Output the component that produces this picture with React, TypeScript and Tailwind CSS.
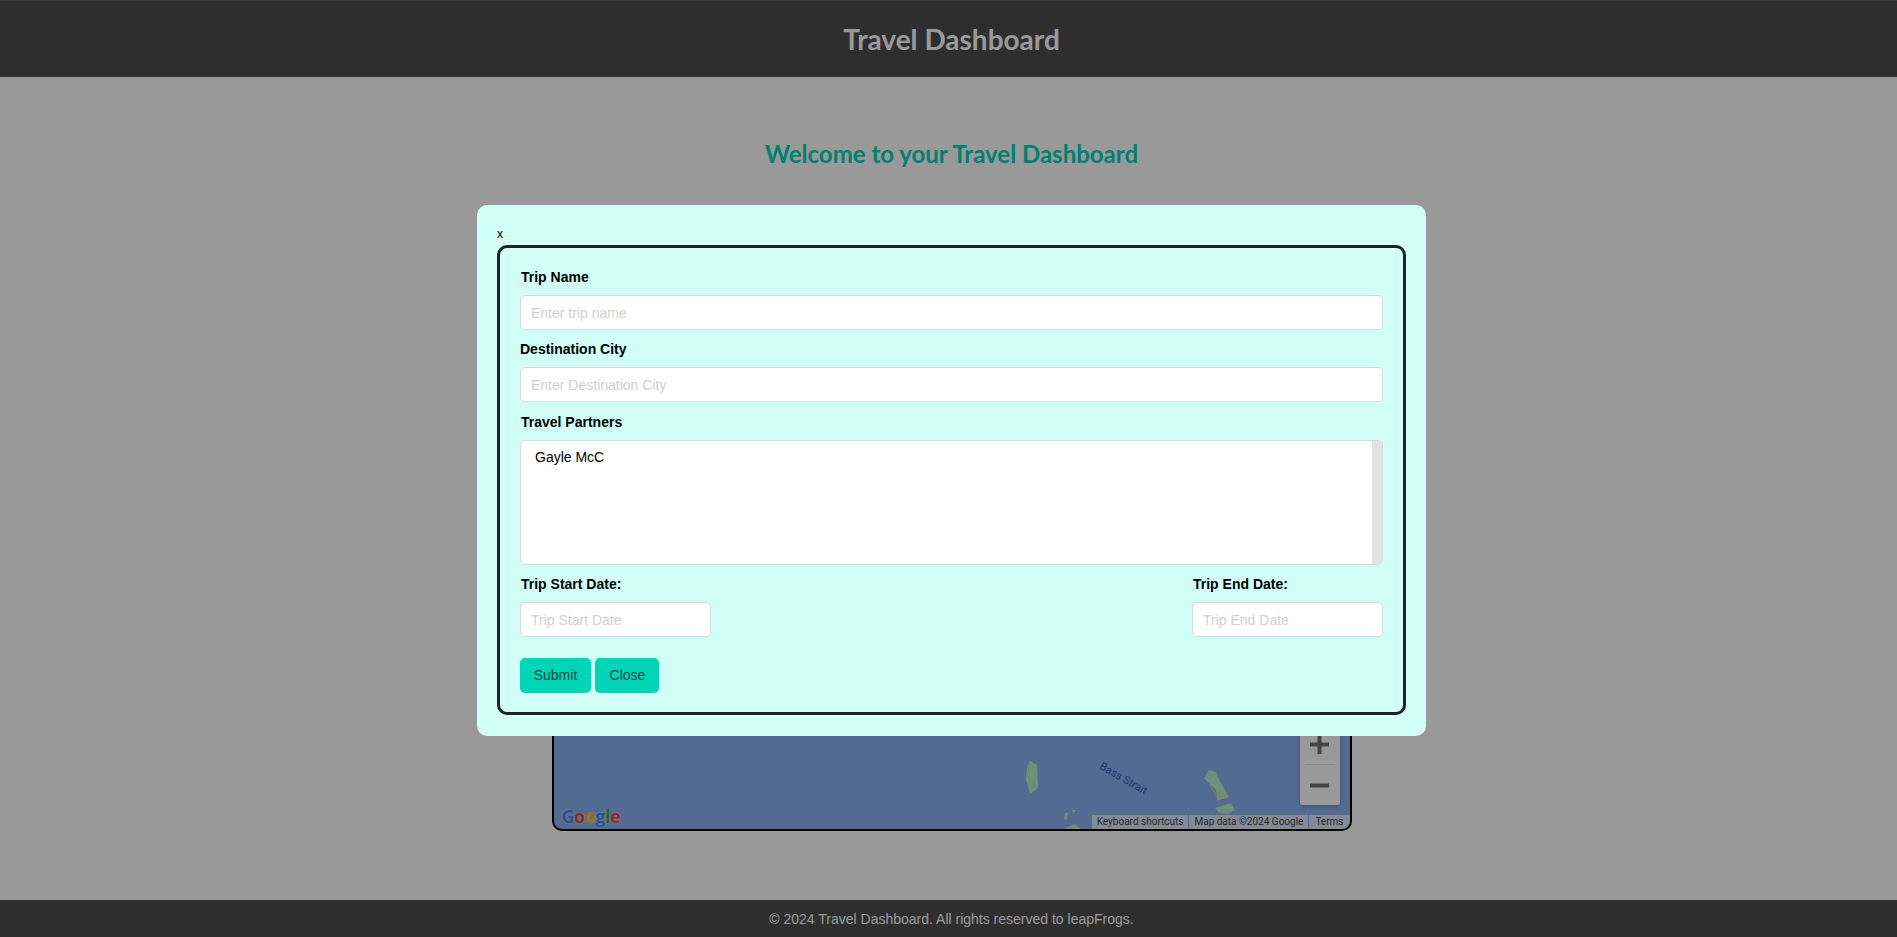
import React from 'react';

const labelClass = 'block mb-2 text-[14px] leading-5 font-bold text-black';
const inputClass =
  'block h-[35px] w-full rounded-[5px] border border-[#d8d8e2] bg-white px-[10px] text-[14px] text-black outline-none placeholder:text-[#cfcfcf]';

const TravelMap: React.FC = () => (
  <div className="relative w-[800px] h-[600px] overflow-hidden rounded-b-[10px] border-2 border-black bg-[#8ab1f5]">
    <svg className="absolute inset-0 w-full h-full" viewBox="0 0 796 596">
      <g fill="#b4f0cc">
        <path d="M476 528 L483 532 L484 555 L476 561 L472 547 L473 534 Z" />
        <path d="M655 537 L662 539 L667 550 L675 564 L663 568 L662 557 L655 550 L650 545 Z" />
        <path d="M661 575 L677 570 L681 577 L675 581 L665 580 Z" />
        <path d="M511 580 L514 580 L513 587 L510 586 Z" />
        <path d="M518 577 L522 577 L519 581 Z" />
        <path d="M510 596 L520 591 L527 596 Z" />
      </g>
      <path d="M476 530 L473 544 L480 550 L478 555 M655 539 L656 552 L663 564 L673 564" fill="none" stroke="#e0cf90" strokeWidth="1" />
    </svg>
    <span className="absolute left-[543px] top-[540px] rotate-[30deg] text-[11px] leading-none text-[#2f5fc0] [font-family:Roboto,sans-serif]">
      Bass Strait
    </span>
    <span className="absolute left-[8px] bottom-[1px] text-[18px] leading-6 font-bold tracking-[-0.5px] [text-shadow:0_0_2px_rgba(255,255,255,0.8)] [font-family:'Open_Sans',sans-serif]">
      <span className="text-[#4285f4]">G</span>
      <span className="text-[#ea4335]">o</span>
      <span className="text-[#fbbc05]">o</span>
      <span className="text-[#4285f4]">g</span>
      <span className="text-[#34a853]">l</span>
      <span className="text-[#ea4335]">e</span>
    </span>
    <div className="absolute right-[10px] bottom-[24px] w-10 h-[81px] flex flex-col items-center rounded-[2px] bg-white shadow-[0_1px_4px_rgba(0,0,0,0.3)]">
      <div className="h-10 flex items-center justify-center">
        <svg width="19" height="19" viewBox="0 0 19 19" fill="#737373">
          <path d="M7.5 0h4v7.5h7.5v4h-7.5v7.5h-4v-7.5h-7.5v-4h7.5z" />
        </svg>
      </div>
      <div className="w-[30px] h-px bg-[#e6e6e6]" />
      <div className="h-10 flex items-center justify-center">
        <svg width="19" height="19" viewBox="0 0 19 19" fill="#737373">
          <path d="M0 7.5h19v4h-19z" />
        </svg>
      </div>
    </div>
    <div className="absolute right-0 bottom-0 flex gap-px h-[14px] text-[10px] leading-[14px] text-[#444] [font-family:Roboto,sans-serif]">
      <span className="px-[5px] bg-white/70">Keyboard shortcuts</span>
      <span className="px-[5px] bg-white/70">Map data ©2024 Google</span>
      <span className="px-[6px] bg-white/70">Terms</span>
    </div>
  </div>
);

const TripModal: React.FC = () => (
  <div className="w-[949px] rounded-[10px] bg-[#d1fff8] px-5 pb-[21px] [font-family:'Liberation_Sans',sans-serif]">
    <div className="h-10 pt-5 text-[12px] leading-[18px] text-black">x</div>
    <form className="rounded-[10px] border-[3px] border-[#1a2424] px-5 pt-[19px] pb-[19px]">
      <label className={`${labelClass} ml-px`}>Trip Name</label>
      <input className={inputClass} placeholder="Enter trip name" />
      <label className={`${labelClass} mt-[9px]`}>Destination City</label>
      <input className={inputClass} placeholder="Enter Destination City" />
      <label className={`${labelClass} mt-[10px] ml-px`}>Travel Partners</label>
      <div className="flex h-[125px] overflow-hidden rounded-[5px] border border-[#d8d8e2] bg-white">
        <div className="flex-1 px-[14px] pt-[6px] text-[14px] leading-5 text-black">Gayle McC</div>
        <div className="w-[10px] bg-[#e3e3e3]" />
      </div>
      <div className="flex justify-between mt-[9px]">
        <div className="w-[191px]">
          <label className={`${labelClass} ml-px`}>Trip Start Date:</label>
          <input className={inputClass} placeholder="Trip Start Date" />
        </div>
        <div className="w-[191px]">
          <label className={`${labelClass} ml-px`}>Trip End Date:</label>
          <input className={inputClass} placeholder="Trip End Date" />
        </div>
      </div>
      <div className="flex gap-1 mt-[21px]">
        <button type="button" className="h-[35px] w-[71px] rounded-[5px] bg-[#00d5b7] text-[14px] text-[#0a4a40]">Submit</button>
        <button type="button" className="h-[35px] w-[64px] pl-px rounded-[5px] bg-[#00d5b7] text-[14px] text-[#0a4a40]">Close</button>
      </div>
    </form>
  </div>
);

export default function App() {
  return (
    <div className="relative flex flex-col h-screen overflow-hidden bg-white">
      <header className="h-[77px] shrink-0 pl-[6px] flex items-center justify-center border-t border-[#5e5e6a] bg-[#4d4d4d]">
        <h1 className="text-[28px] font-bold text-white [font-family:Lato,sans-serif]">Travel Dashboard</h1>
      </header>
      <main className="flex-1 min-h-0 pl-[6px] flex flex-col items-center justify-end pb-[69px]">
        <h2 className="mb-[62px] text-[24px] leading-[30px] font-bold text-[#00d5b7] [font-family:Lato,sans-serif]">
          Welcome to your Travel Dashboard
        </h2>
        <TravelMap />
      </main>
      <footer className="h-[37px] shrink-0 pl-[6px] pt-px flex items-center justify-center bg-[#4d4d4d] text-[14px] text-white [font-family:'Liberation_Sans',sans-serif]">
        © 2024 Travel Dashboard. All rights reserved to leapFrogs.
      </footer>
      <div className="absolute inset-0 bg-black/40 pl-[6px] pt-[205px] flex justify-center items-start">
        <TripModal />
      </div>
    </div>
  );
}
